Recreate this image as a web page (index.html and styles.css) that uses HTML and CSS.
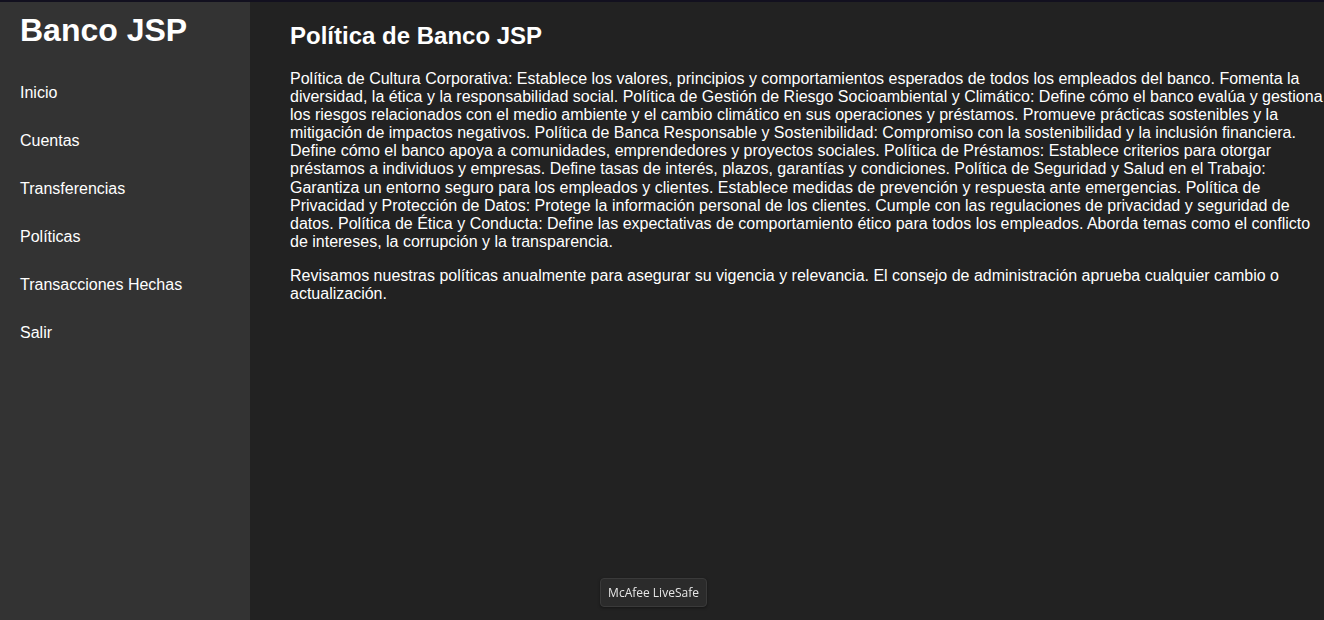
FILE: index.html
```html
<!DOCTYPE html>
<html lang="es">
<head>
<meta charset="utf-8">
<title>Banco JSP</title>
<link rel="stylesheet" href="styles.css">
</head>
<body>
<div class="topline"></div>
<div class="layout">
  <aside class="sidebar">
    <h1 class="brand">Banco JSP</h1>
    <nav class="nav">
      <a class="nav-item" href="#">Inicio</a>
      <a class="nav-item" href="#">Cuentas</a>
      <a class="nav-item" href="#">Transferencias</a>
      <a class="nav-item" href="#">Políticas</a>
      <a class="nav-item" href="#">Transacciones Hechas</a>
      <a class="nav-item" href="#">Salir</a>
    </nav>
  </aside>
  <main class="main">
    <h2 class="title">Política de Banco JSP</h2>
    <p class="text">Política de Cultura Corporativa: Establece los valores, principios y comportamientos esperados de todos los empleados del banco. Fomenta la diversidad, la ética y la responsabilidad social. Política de Gestión de Riesgo Socioambiental y Climático: Define cómo el banco evalúa y gestiona los riesgos relacionados con el medio ambiente y el cambio climático en sus operaciones y préstamos. Promueve prácticas sostenibles y la mitigación de impactos negativos. Política de Banca Responsable y Sostenibilidad: Compromiso con la sostenibilidad y la inclusión financiera. Define cómo el banco apoya a comunidades, emprendedores y proyectos sociales. Política de Préstamos: Establece criterios para otorgar préstamos a individuos y empresas. Define tasas de interés, plazos, garantías y condiciones. Política de Seguridad y Salud en el Trabajo: Garantiza un entorno seguro para los empleados y clientes. Establece medidas de prevención y respuesta ante emergencias. Política de Privacidad y Protección de Datos: Protege la información personal de los clientes. Cumple con las regulaciones de privacidad y seguridad de datos. Política de Ética y Conducta: Define las expectativas de comportamiento ético para todos los empleados. Aborda temas como el conflicto de intereses, la corrupción y la transparencia.</p>
    <p class="text">Revisamos nuestras políticas anualmente para asegurar su vigencia y relevancia. El consejo de administración aprueba cualquier cambio o actualización.</p>
  </main>
</div>
<div class="tooltip">McAfee LiveSafe</div>
</body>
</html>
```

FILE: styles.css
```css
html, body {
  margin: 0;
  padding: 0;
  height: 100%;
}
body {
  background: #222222;
  color: #ffffff;
  font-family: "Liberation Sans", Arial, sans-serif;
  font-size: 16px;
  display: flex;
  flex-direction: column;
  overflow: hidden;
}
.topline {
  height: 2px;
  background: #12101f;
  flex: none;
}
.layout {
  flex: 1;
  display: flex;
  min-height: 0;
}
.sidebar {
  width: 250px;
  flex: none;
  background: #333333;
  padding: 10px 20px 0;
  box-sizing: border-box;
}
.brand {
  margin: 0 0 20px;
  font-size: 32px;
  font-weight: bold;
  color: #ffffff;
}
.nav {
  display: flex;
  flex-direction: column;
}
.nav-item {
  color: #ffffff;
  text-decoration: none;
  line-height: 18px;
  padding: 15px 0;
}
.main {
  flex: 1;
  min-width: 0;
  padding: 20px 0 0 40px;
}
.title {
  margin: 0 0 20px;
  font-size: 24px;
  font-weight: bold;
}
.text {
  margin: 0 -4px 16px 0;
  line-height: 18.1px;
}
.tooltip {
  position: fixed;
  left: 600px;
  top: 578px;
  width: 107px;
  height: 29px;
  box-sizing: border-box;
  background: #2b2b2b;
  border: 1px solid #3a3a3a;
  border-radius: 4px;
  color: #e6e6e6;
  font-family: "Open Sans", "Noto Sans", sans-serif;
  font-size: 12px;
  display: flex;
  align-items: center;
  justify-content: center;
  box-shadow: 0 1px 3px rgba(0,0,0,0.4);
}
```
